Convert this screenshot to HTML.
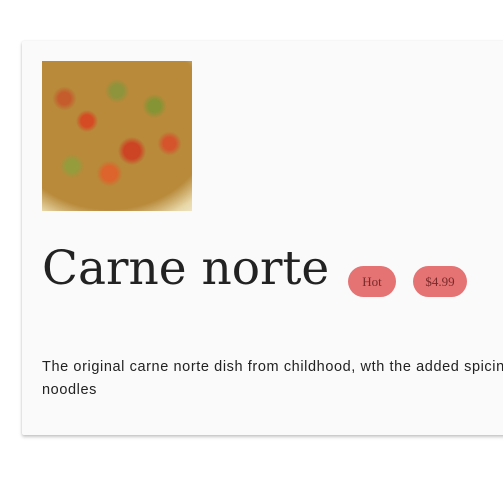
<!DOCTYPE html>
<html><head><style>
html,body{margin:0;padding:0;background:#fff;width:503px;height:502px;overflow:hidden;position:relative}
.card{position:absolute;left:22px;top:41px;width:520px;height:394px;background:#fafafa;box-shadow:0 2px 3px rgba(0,0,0,.22),0 0 2px rgba(0,0,0,.08);border-radius:2px}
.img{position:absolute;left:42px;top:61px;width:150px;height:150px;overflow:hidden;
background:
radial-gradient(circle at 30% 40%,rgba(220,60,30,.8) 0 6px,transparent 11px),
radial-gradient(circle at 60% 60%,rgba(210,50,30,.8) 0 8px,transparent 14px),
radial-gradient(circle at 75% 30%,rgba(120,150,50,.8) 0 6px,transparent 12px),
radial-gradient(circle at 45% 75%,rgba(230,90,40,.8) 0 7px,transparent 13px),
radial-gradient(circle at 20% 70%,rgba(140,160,60,.8) 0 6px,transparent 12px),
radial-gradient(circle at 85% 55%,rgba(220,70,40,.8) 0 6px,transparent 12px),
radial-gradient(circle at 15% 25%,rgba(200,80,40,.8) 0 6px,transparent 12px),
radial-gradient(circle at 50% 20%,rgba(130,150,60,.8) 0 6px,transparent 12px),
radial-gradient(ellipse 110% 95% at 45% 40%,#b88a3a 0 62%,#e8d8a8 75%,#f6f2e2 88%);}
.title{position:absolute;left:42px;top:234px;font-family:"DejaVu Serif",serif;font-size:47px;color:#222;line-height:70px;white-space:nowrap;letter-spacing:0}
.badge{position:absolute;top:266px;height:31px;border-radius:16px;background:#e57373;color:#7a2a2a;font-family:"Liberation Serif",serif;font-size:13px;line-height:31px;text-align:center}
.desc{position:absolute;left:42px;top:356px;font-family:"Liberation Sans",sans-serif;font-size:14.5px;line-height:23px;color:#222;white-space:nowrap;letter-spacing:0.6px}
</style></head><body>
<div class="card"></div>
<div class="img"></div>
<div class="title">Carne norte</div>
<div class="badge" style="left:348px;width:48px">Hot</div>
<div class="badge" style="left:413px;width:54px">$4.99</div>
<div class="desc">The original carne norte dish from childhood, wth the added spicing<br>noodles</div>
</body></html>
